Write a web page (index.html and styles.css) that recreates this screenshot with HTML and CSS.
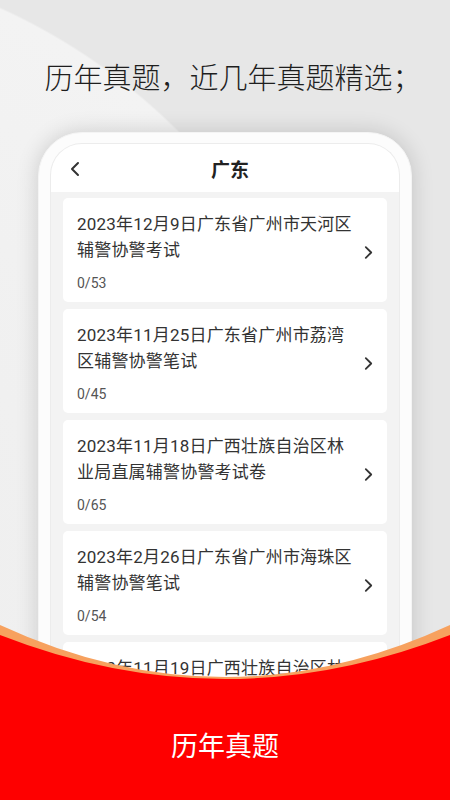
FILE: index.html
```html
<!DOCTYPE html>
<html lang="zh-CN">
  <head>
    <meta charset="UTF-8" />
    <title>历年真题</title>
    <link rel="stylesheet" href="styles.css">
  </head>
  <body>
    <div class="page">
      <h1 class="headline">历年真题，近几年真题精选；</h1>

      <div class="phone">
        <div class="screen">
          <div class="nav">
            <svg class="back" width="10" height="16" viewBox="0 0 10 16">
              <polyline points="8,2 2,8 8,14" fill="none" stroke="#333" stroke-width="2" stroke-linecap="round" stroke-linejoin="round" />
            </svg>
            <span class="nav-title">广东</span>
          </div>

          <div class="list">
            <div class="card">
              <div class="card-body">
                <div class="card-title">2023年12月9日广东省广州市天河区辅警协警考试</div>
                <div class="card-count">0/53</div>
              </div>
              <svg class="arrow" width="10" height="16" viewBox="0 0 10 16">
                <polyline points="2,2 8,8 2,14" fill="none" stroke="#333" stroke-width="2" stroke-linecap="round" stroke-linejoin="round" />
              </svg>
            </div>
            <div class="card">
              <div class="card-body">
                <div class="card-title">2023年11月25日广东省广州市荔湾区辅警协警笔试</div>
                <div class="card-count">0/45</div>
              </div>
              <svg class="arrow" width="10" height="16" viewBox="0 0 10 16">
                <polyline points="2,2 8,8 2,14" fill="none" stroke="#333" stroke-width="2" stroke-linecap="round" stroke-linejoin="round" />
              </svg>
            </div>
            <div class="card">
              <div class="card-body">
                <div class="card-title">2023年11月18日广西壮族自治区林业局直属辅警协警考试卷</div>
                <div class="card-count">0/65</div>
              </div>
              <svg class="arrow" width="10" height="16" viewBox="0 0 10 16">
                <polyline points="2,2 8,8 2,14" fill="none" stroke="#333" stroke-width="2" stroke-linecap="round" stroke-linejoin="round" />
              </svg>
            </div>
            <div class="card">
              <div class="card-body">
                <div class="card-title">2023年2月26日广东省广州市海珠区辅警协警笔试</div>
                <div class="card-count">0/54</div>
              </div>
              <svg class="arrow" width="10" height="16" viewBox="0 0 10 16">
                <polyline points="2,2 8,8 2,14" fill="none" stroke="#333" stroke-width="2" stroke-linecap="round" stroke-linejoin="round" />
              </svg>
            </div>
            <div class="card">
              <div class="card-body">
                <div class="card-title">2023年11月19日广西壮族自治区林业局辅警协警考试</div>
                <div class="card-count">0/50</div>
              </div>
              <svg class="arrow" width="10" height="16" viewBox="0 0 10 16">
                <polyline points="2,2 8,8 2,14" fill="none" stroke="#333" stroke-width="2" stroke-linecap="round" stroke-linejoin="round" />
              </svg>
            </div>
          </div>
        </div>
      </div>

      <div class="banner">
        <svg class="wave" viewBox="0 0 450 175" preserveAspectRatio="none">
          <path d="M0 0 Q225 104 450 0 L450 175 L0 175 Z" fill="#f7a15e" />
          <path d="M0 10 Q225 98 450 10 L450 175 L0 175 Z" fill="#fe0000" />
        </svg>
        <div class="banner-text">历年真题</div>
      </div>
    </div>
  </body>
</html>
```

FILE: styles.css
```css
html, body {
  margin: 0;
  padding: 0;
}

body {
  width: 450px;
  height: 800px;
  overflow: hidden;
  font-family: Roboto, "Noto Sans CJK SC", sans-serif;
  background: #e8e8e8;
}

.page {
  position: relative;
  width: 450px;
  height: 800px;
  overflow: hidden;
  background: radial-gradient(circle 607px at -250px 560px, #ededed 0, #f3f3f3 605px, #e7e7e7 607px);
}

.headline {
  margin: 0;
  padding: 56px 0 0 16px;
  height: 40px;
  line-height: 40px;
  text-align: center;
  font-family: "Noto Sans CJK SC", sans-serif;
  font-size: 29px;
  font-weight: 300;
  color: #1e1e1e;
}

.phone {
  margin: 36px 38px 0;
  padding: 10px 11px 0;
  height: 700px;
  background: #fcfcfc;
  border: 1px solid #f4f4f4;
  border-radius: 44px 44px 0 0;
  box-shadow: 0 0 22px rgba(0, 0, 0, 0.16);
}

.screen {
  height: 100%;
  background: #fff;
  border: 1px solid #ececec;
  border-bottom: none;
  border-radius: 32px 32px 0 0;
  overflow: hidden;
}

.nav {
  position: relative;
  height: 48px;
  display: flex;
  align-items: center;
  justify-content: center;
}

.nav .back {
  position: absolute;
  left: 19px;
  top: 17px;
}

.nav-title {
  font-family: "Noto Sans CJK SC", sans-serif;
  font-size: 19px;
  font-weight: bold;
  color: #222;
  padding-left: 10px;
}

.list {
  background: #f3f3f3;
  padding: 6px 12px;
  height: 100%;
}

.card {
  display: flex;
  align-items: center;
  background: #fff;
  border-radius: 5px;
  padding: 13px 0 9px 14px;
  margin-bottom: 7px;
}

.card-body {
  width: 279px;
}

.card-title {
  font-size: 17px;
  line-height: 26px;
  letter-spacing: 0.2px;
  color: #333;
}

.card-count {
  margin-top: 10px;
  font-size: 14px;
  line-height: 20px;
  color: #555;
}

.card .arrow {
  margin-left: auto;
  margin-right: 14px;
  width: 9px;
  height: 15px;
}

.banner {
  position: absolute;
  left: 0;
  right: 0;
  bottom: 0;
  height: 175px;
}

.banner .wave {
  position: absolute;
  left: 0;
  top: 0;
  width: 100%;
  height: 100%;
}

.banner-text {
  position: relative;
  padding-top: 104px;
  line-height: 32px;
  text-align: center;
  font-family: "Noto Sans CJK SC", sans-serif;
  font-size: 27px;
  font-weight: 400;
  color: #fff;
}
```
